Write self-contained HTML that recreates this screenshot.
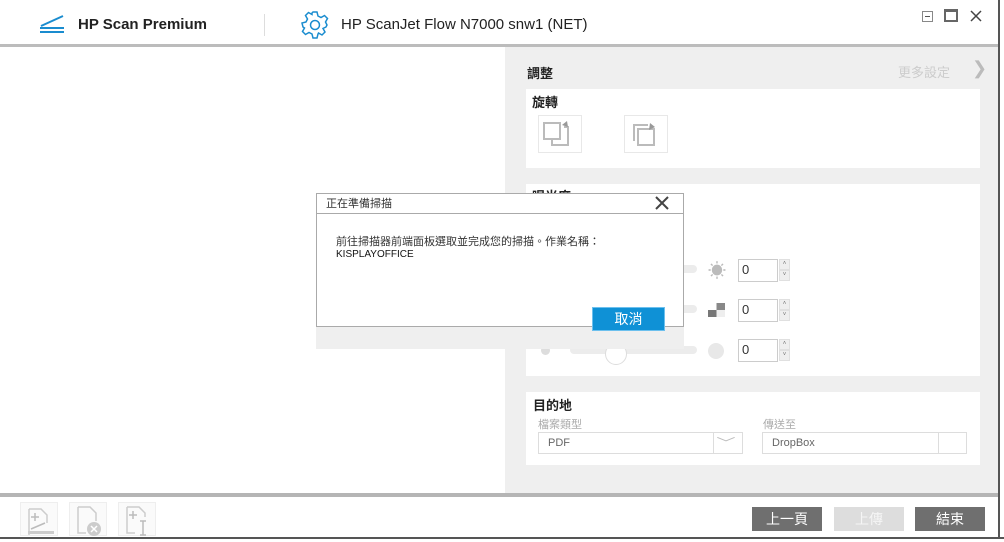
<!DOCTYPE html>
<html><head><meta charset="utf-8"><style>
*{margin:0;padding:0;box-sizing:border-box}
body{width:1004px;height:541px;background:#fff;position:relative;overflow:hidden;font-family:"Liberation Sans","Noto Sans CJK TC",sans-serif}
.a{position:absolute}
.cj{font-family:"Liberation Sans","Noto Sans CJK TC",sans-serif}
.card{position:absolute;background:#fff}
.num{position:absolute;width:40px;height:23px;border:1px solid #ccc;background:#fff;font-size:13px;padding:2px 0 0 3px;color:#333}
.spin{position:absolute;width:11px;height:23px;}
.spin div{height:11px;background:#efefef;border:1px solid #e0e0e0;font-size:6px;text-align:center;color:#777;line-height:8px}
.btn{position:absolute;top:507px;height:24px;width:70px;color:#fff;font-size:14px;text-align:center;line-height:24px}
.ficon{position:absolute;top:502px;width:38px;height:34px;border:1px solid #eee;background:#fafafa}
</style></head><body>
<div class="a" style="left:998px;top:0;width:6px;height:541px;background:#fff;border-left:2px solid #555"></div>
<div class="a" style="left:0;top:537px;width:1004px;height:4px;background:#fff;border-top:2px solid #555"></div>
<svg class="a" style="left:38px;top:14px" width="30" height="20"><path d="M3 12 L25 2" stroke="#1a8ccf" stroke-width="2"/><rect x="2" y="13" width="24" height="2" fill="#1a8ccf"/><rect x="2" y="17" width="24" height="2" fill="#1a8ccf"/></svg>
<div class="a" style="left:78px;top:16px;font-size:15px;font-weight:bold;color:#222">HP Scan Premium</div>
<div class="a" style="left:264px;top:14px;width:1px;height:22px;background:#ddd"></div>
<svg class="a" style="left:300px;top:10px" width="30" height="30" viewBox="0 0 30 30"><path d="M13 2h4l1 4 3 1.5 3.5-2 3 3-2 3.5L27 15l0 0 -1 2 -3 1.5 2 3.5-3 3-3.5-2L18 24l-1 4h-4l-1-4-3-1.5-3.5 2-3-3 2-3.5L3 17l-1-4 4-1 1.5-3-2-3.5 3-3 3.5 2L12 3z" fill="none" stroke="#1a8ccf" stroke-width="1.5"/><circle cx="15" cy="15" r="4.5" fill="none" stroke="#1a8ccf" stroke-width="1.5"/></svg>
<div class="a" style="left:341px;top:16px;font-size:15px;color:#222">HP ScanJet Flow N7000 snw1 (NET)</div>
<div class="a" style="left:922px;top:11px;width:11px;height:11px;border:1px solid #888"><div style="margin:4px 2px;height:1px;background:#555"></div></div>
<div class="a" style="left:944px;top:9px;width:14px;height:13px;border:2px solid #666;border-top-width:3px"></div>
<svg class="a" style="left:969px;top:9px" width="14" height="14"><path d="M2 2l10 10M12 2L2 12" stroke="#444" stroke-width="1.5"/></svg>
<div class="a" style="left:0;top:44px;width:998px;height:3px;background:#bcbcbc"></div>
<div class="a" style="left:505px;top:47px;width:493px;height:446px;background:#efefef"></div>
<div class="a cj" style="left:527px;top:63px;font-size:13px;font-weight:bold;color:#222">調整</div>
<div class="a cj" style="left:898px;top:62px;font-size:13px;color:#ccc">更多設定</div>
<div class="a" style="left:972px;top:58px;font-size:18px;color:#bbb">❯</div>
<div class="card" style="left:526px;top:89px;width:454px;height:79px"></div>
<div class="a cj" style="left:532px;top:92px;font-size:13px;font-weight:bold;color:#222">旋轉</div>
<div class="a" style="left:538px;top:115px;width:44px;height:38px;border:1px solid #e8e8e8"></div>
<svg class="a" style="left:538px;top:115px" width="44" height="38"><rect x="6" y="8" width="16" height="16" fill="none" stroke="#bbb" stroke-width="2"/><path d="M14 24v6h16V12h-4" fill="none" stroke="#bbb" stroke-width="2"/><path d="M24 10l5-4 1 6" fill="#999"/></svg>
<div class="a" style="left:624px;top:115px;width:44px;height:38px;border:1px solid #e8e8e8"></div>
<svg class="a" style="left:624px;top:115px" width="44" height="38"><rect x="14" y="14" width="16" height="16" fill="none" stroke="#bbb" stroke-width="2"/><path d="M10 26V10h14" fill="none" stroke="#bbb" stroke-width="2"/><path d="M26 8l5 4-6 3" fill="#999"/></svg>
<div class="card" style="left:526px;top:184px;width:454px;height:192px"></div>
<div class="a cj" style="left:532px;top:186px;font-size:13px;font-weight:bold;color:#222">曝光度</div>
<div class="a" style="left:570px;top:265px;width:127px;height:8px;border-radius:4px;background:#ececec"></div>
<div class="a" style="left:570px;top:305px;width:127px;height:8px;border-radius:4px;background:#ececec"></div>
<div class="a" style="left:570px;top:346px;width:127px;height:8px;border-radius:4px;background:#ececec"></div>
<div class="a" style="left:541px;top:346px;width:9px;height:9px;border-radius:50%;background:#ddd"></div>
<div class="a" style="left:605px;top:343px;width:22px;height:22px;border-radius:50%;background:#fff;border:1px solid #ddd"></div>
<div class="a" style="left:708px;top:264px;font-size:18px;color:#bbb;line-height:14px">☀</div>
<div class="a" style="left:708px;top:303px;width:17px;height:14px;background:linear-gradient(90deg,#fff 50%,#888 50%) top/100% 50% no-repeat,linear-gradient(90deg,#777 50%,#eee 50%) bottom/100% 50% no-repeat"></div>
<div class="a" style="left:708px;top:343px;width:16px;height:16px;border-radius:50%;background:#e8e8e8"></div>
<div class="num" style="left:738px;top:259px">0</div><div class="spin" style="left:779px;top:259px"><div>˄</div><div>˅</div></div>
<div class="num" style="left:738px;top:299px">0</div><div class="spin" style="left:779px;top:299px"><div>˄</div><div>˅</div></div>
<div class="num" style="left:738px;top:339px">0</div><div class="spin" style="left:779px;top:339px"><div>˄</div><div>˅</div></div>
<div class="card" style="left:526px;top:392px;width:454px;height:73px"></div>
<div class="a cj" style="left:533px;top:395px;font-size:13px;font-weight:bold;color:#222">目的地</div>
<div class="a cj" style="left:538px;top:416px;font-size:11px;color:#aaa">檔案類型</div>
<div class="a cj" style="left:763px;top:416px;font-size:11px;color:#aaa">傳送至</div>
<div class="a" style="left:538px;top:432px;width:205px;height:22px;border:1px solid #ddd;font-size:11px;color:#666;padding:4px 9px">PDF</div>
<div class="a" style="left:713px;top:432px;width:1px;height:22px;background:#ddd"></div>
<div class="a" style="left:720px;top:434px;font-size:12px;color:#bbb;transform:scaleX(1.6)">﹀</div>
<div class="a" style="left:762px;top:432px;width:205px;height:22px;border:1px solid #ddd;font-size:11px;color:#666;padding:4px 9px">DropBox</div>
<div class="a" style="left:938px;top:432px;width:1px;height:22px;background:#ddd"></div>
<div class="a" style="left:0;top:493px;width:998px;height:4px;background:#b5b5b5"></div>
<div class="ficon" style="left:20px"><svg width="38" height="34"><path d="M8 6h12l6 6v8M8 6v26" fill="none" stroke="#ccc" stroke-width="1.5"/><path d="M10 14h8M14 10v8M10 26l14-6" stroke="#bbb" stroke-width="1.5"/><rect x="7" y="28" width="26" height="3" fill="#ccc"/></svg></div>
<div class="ficon" style="left:69px"><svg width="38" height="34"><path d="M8 4h12l6 6v8M8 4v26h8" fill="none" stroke="#ccc" stroke-width="1.5"/><circle cx="24" cy="26" r="7" fill="#ccc"/><path d="M21 23l6 6M27 23l-6 6" stroke="#fff" stroke-width="1.5"/></svg></div>
<div class="ficon" style="left:118px"><svg width="38" height="34"><path d="M8 4h12l6 6v4M8 4v26h8" fill="none" stroke="#ccc" stroke-width="1.5"/><path d="M10 12h8M14 8v8M24 18v14M21 18h6M21 32h6" stroke="#bbb" stroke-width="1.5"/></svg></div>
<div class="btn cj" style="left:752px;background:#6f6f6f">上一頁</div>
<div class="btn cj" style="left:834px;background:#ddd;color:#f5f5f5">上傳</div>
<div class="btn cj" style="left:915px;background:#6f6f6f">結束</div>
<div class="a" style="left:316px;top:326px;width:368px;height:23px;background:#efefef"></div>
<div class="a" style="left:316px;top:193px;width:368px;height:134px;background:#fff;border:1px solid #aaa"></div>
<div class="a" style="left:317px;top:213px;width:366px;height:1px;background:#aaa"></div>
<div class="a cj" style="left:326px;top:197px;font-size:11px;color:#333;line-height:14px">正在準備掃描</div>
<svg class="a" style="left:655px;top:196px" width="14" height="14"><path d="M1 1l12 12M13 1L1 13" stroke="#444" stroke-width="2"/></svg>
<div class="a cj" style="left:336px;top:235px;font-size:11px;color:#333;line-height:14px">前往掃描器前端面板選取並完成您的掃描。作業名稱：</div>
<div class="a" style="left:336px;top:249px;font-size:10px;color:#111;line-height:12px">KISPLAYOFFICE</div>
<div class="a cj" style="left:592px;top:307px;width:73px;height:24px;background:#0f91d6;border:1px solid #6cc0ee;color:#fff;font-size:14px;text-align:center;line-height:22px">取消</div>
</body></html>
